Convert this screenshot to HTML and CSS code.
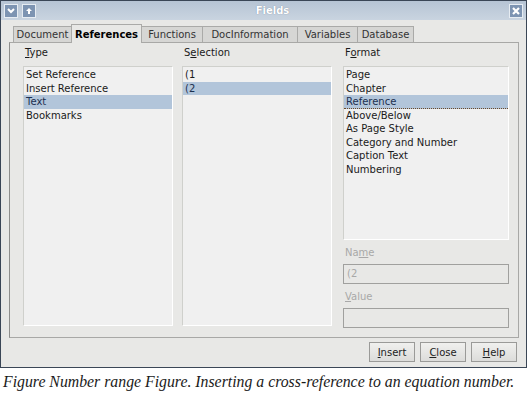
FILE: index.html
```html
<!DOCTYPE html>
<html lang="en">

<head>
    <meta charset="UTF-8">
    <title>Fields</title>
    <link rel="stylesheet" href="styles.css">
</head>

<body>
    <div class="window">
        <div class="titlebar">
            <div class="tbtn">
                <svg width="10" height="10" viewBox="0 0 10 10"><path d="M2 3 L5 6 L8 3" stroke="#fff" stroke-width="2" fill="none"/></svg>
            </div>
            <div class="tbtn">
                <svg width="10" height="10" viewBox="0 0 10 10"><path d="M5 2 L8 5 H6 V8 H4 V5 H2 Z" fill="#fff"/></svg>
            </div>
            <div class="title">Fields</div>
            <div class="tbtn close">
                <svg width="10" height="10" viewBox="0 0 10 10"><path d="M2 2 L8 8 M8 2 L2 8" stroke="#fff" stroke-width="2.2"/></svg>
            </div>
        </div>

        <div class="tabs">
            <div class="tab tab-doc">Document</div>
            <div class="tab tab-ref active">References</div>
            <div class="tab tab-func">Functions</div>
            <div class="tab tab-info">DocInformation</div>
            <div class="tab tab-var">Variables</div>
            <div class="tab tab-db">Database</div>
        </div>

        <div class="panel">
            <div class="col col-type">
                <div class="label"><u>T</u>ype</div>
                <div class="list tall">
                    <div class="item">Set Reference</div>
                    <div class="item">Insert Reference</div>
                    <div class="item selected">Text</div>
                    <div class="item">Bookmarks</div>
                </div>
            </div>
            <div class="col col-sel">
                <div class="label">S<u>e</u>lection</div>
                <div class="list tall">
                    <div class="item">(1</div>
                    <div class="item selected">(2</div>
                </div>
            </div>
            <div class="col col-format">
                <div class="label">F<u>o</u>rmat</div>
                <div class="list short">
                    <div class="item">Page</div>
                    <div class="item">Chapter</div>
                    <div class="item selected focus">Reference</div>
                    <div class="item">Above/Below</div>
                    <div class="item">As Page Style</div>
                    <div class="item">Category and Number</div>
                    <div class="item">Caption Text</div>
                    <div class="item">Numbering</div>
                </div>
                <div class="label small disabled">Na<u>m</u>e</div>
                <div class="field">(2</div>
                <div class="label small disabled"><u>V</u>alue</div>
                <div class="field"></div>
            </div>
        </div>

        <div class="buttons">
            <button><u>I</u>nsert</button>
            <button><u>C</u>lose</button>
            <button><u>H</u>elp</button>
        </div>
    </div>

    <p class="caption">Figure Number range Figure. Inserting a cross-reference to an equation number.</p>
</body>

</html>
```

FILE: styles.css
```css
body {
    margin: 0;
    background: #fff;
    font-family: "DejaVu Sans", sans-serif;
    font-size: 10px;
    color: #1a1a1a;
}

.window {
    width: 525px;
    height: 366px;
    border: 1px solid #3a4656;
    background: #e8e8e6;
    display: flex;
    flex-direction: column;
}

.titlebar {
    height: 19px;
    background: linear-gradient(#b6c4d4, #c9d4e0);
    display: flex;
    align-items: center;
    padding: 0 3px;
    gap: 4px;
}

.tbtn {
    width: 12px;
    height: 12px;
    background: #7d94b2;
    border: 1px solid #e6ecf2;
    display: flex;
    align-items: center;
    justify-content: center;
}

.title {
    flex: 1;
    text-align: center;
    color: #fff;
    font-weight: bold;
    font-size: 10px;
    text-shadow: 0 0 1px #6a7c92;
}

.tabs {
    display: flex;
    padding: 4px 0 0 12px;
    height: 18px;
    align-items: flex-end;
}

.tab {
    box-sizing: border-box;
    height: 16px;
    line-height: 16px;
    text-align: center;
    background: #d6d6d4;
    border: 1px solid #aaaaa8;
    border-bottom: none;
    margin-right: -1px;
    color: #333;
    white-space: nowrap;
}

.tab-doc { width: 59px; }
.tab-ref { width: 71px; }
.tab-func { width: 62px; }
.tab-info { width: 96px; }
.tab-var { width: 61px; }
.tab-db { width: 57px; }

.tab.active {
    height: 19px;
    line-height: 19px;
    background: #e8e8e6;
    font-weight: bold;
    color: #000;
    position: relative;
    z-index: 1;
    margin-bottom: -1px;
}

.panel {
    margin: 0 7px 0 8px;
    height: 291px;
    border: 1px solid #a8a8a6;
    border-left-color: #8e8e8c;
    display: flex;
    padding: 3px 0 0 13px;
}

.col {
    display: flex;
    flex-direction: column;
}

.col-type {
    width: 150px;
    margin-right: 9px;
}

.col-sel {
    width: 150px;
    margin-right: 11px;
}

.col-format {
    width: 166px;
}

.label {
    height: 13px;
    line-height: 13px;
    margin: 0 0 7px 2px;
}

.label.small {
    margin: 6px 0 5px 2px;
}

.label.disabled {
    color: #a8a8a8;
}

.list {
    background: #f0f0f0;
    border: 1px solid #cfd0cc;
    border-right-color: #fff;
    border-bottom-color: #fff;
    padding-top: 1px;
}

.list.tall {
    height: 257px;
}

.list.short {
    height: 171px;
}

.item {
    height: 13.5px;
    line-height: 13.5px;
    padding-left: 2px;
    white-space: nowrap;
}

.item.selected {
    background: #b2c5da;
    color: #1c3050;
}

.item.focus {
    border-bottom: 1px dotted #6a4a2a;
    height: 12.5px;
}

.field {
    height: 18px;
    line-height: 18px;
    border: 1px solid #a0a09e;
    background: #e8e8e6;
    color: #a8a8a8;
    padding-left: 3px;
}

.buttons {
    display: flex;
    justify-content: flex-end;
    gap: 5px;
    padding: 4px 9px 0 0;
}

button {
    width: 46px;
    height: 20px;
    font-family: "DejaVu Sans", sans-serif;
    font-size: 10px;
    color: #222;
    background: linear-gradient(#f0f0ee, #dcdcda);
    border: 1px solid #9a9a98;
    padding: 0;
}

.caption {
    margin: 5px 0 0 3px;
    font-family: "Liberation Serif", serif;
    font-style: italic;
    font-size: 15.8px;
    white-space: nowrap;
}
```
